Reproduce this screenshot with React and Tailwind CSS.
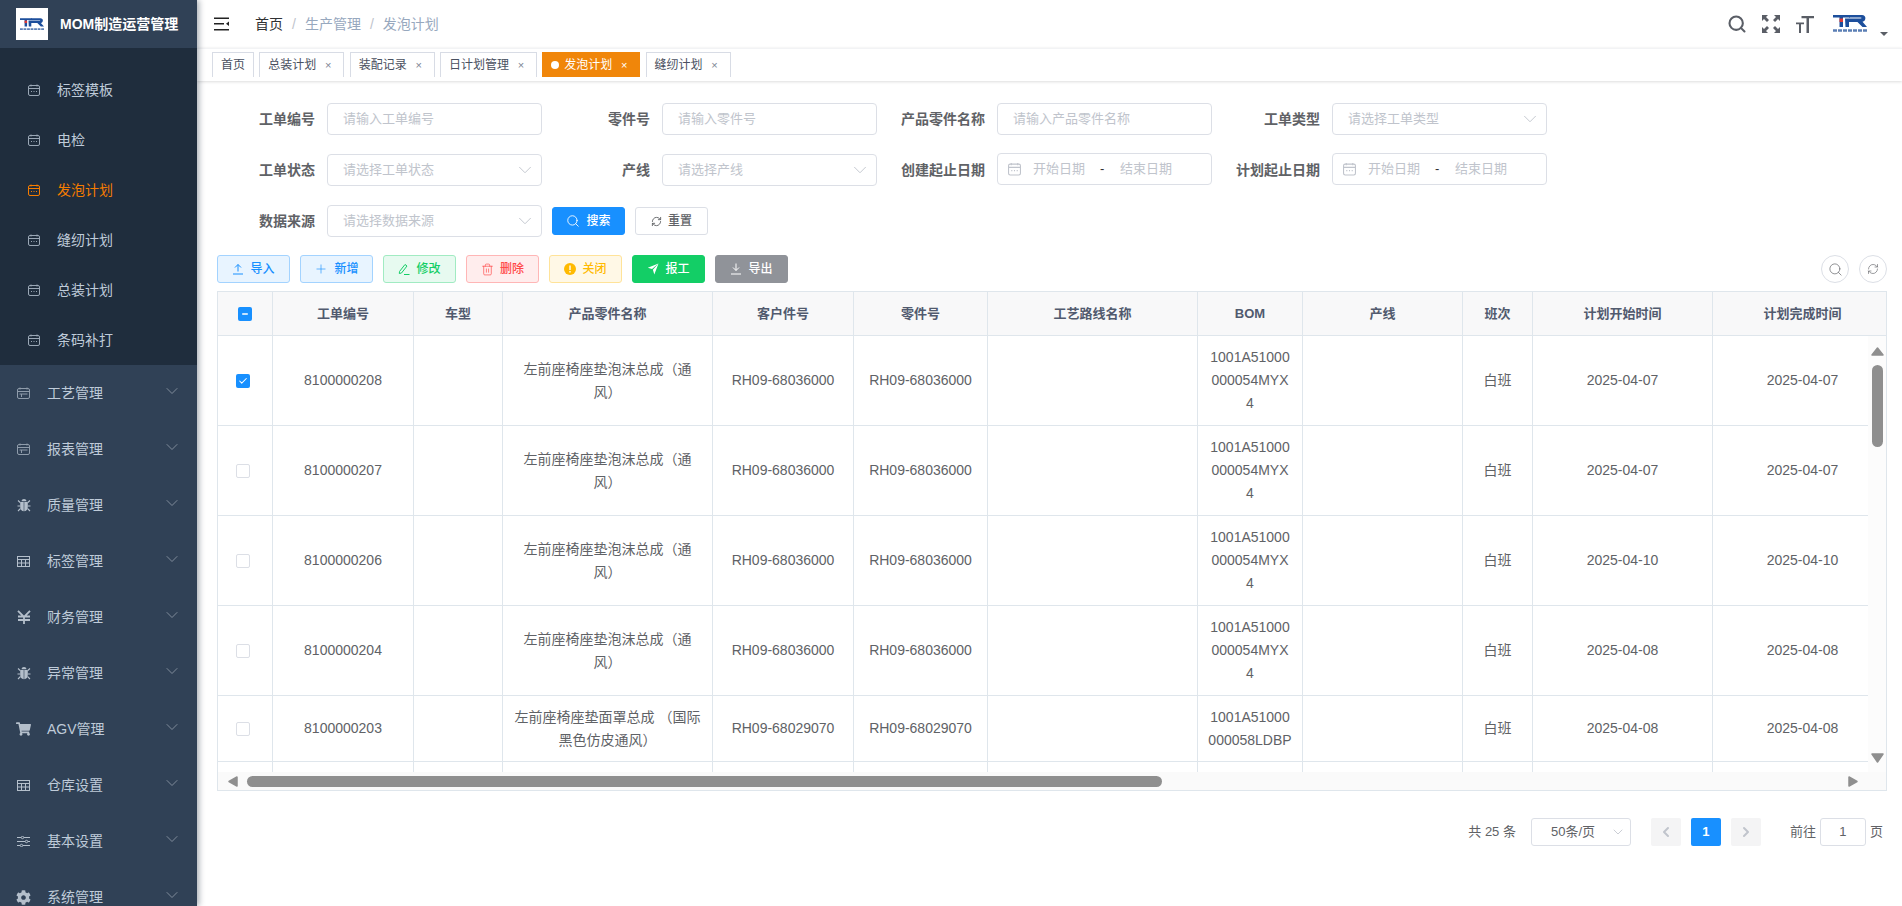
import React from 'react';
import { Search, Trash2, RefreshCw, ChevronDown, ChevronLeft, ChevronRight, Check, Minus, Plus } from 'lucide-react';
import { FaShoppingCart, FaCog } from 'react-icons/fa';

const subMenus = ['标签模板', '电检', '发泡计划', '缝纫计划', '总装计划', '条码补打'];

const mainMenus = [
  { label: '工艺管理', icon: 'plan' },
  { label: '报表管理', icon: 'plan' },
  { label: '质量管理', icon: 'bug' },
  { label: '标签管理', icon: 'table' },
  { label: '财务管理', icon: 'yen' },
  { label: '异常管理', icon: 'bug' },
  { label: 'AGV管理', icon: 'cart' },
  { label: '仓库设置', icon: 'table' },
  { label: '基本设置', icon: 'sliders' },
  { label: '系统管理', icon: 'cog' },
];

const tags = [
  { label: '首页', fixed: true },
  { label: '总装计划' },
  { label: '装配记录' },
  { label: '日计划管理' },
  { label: '发泡计划', active: true },
  { label: '缝纫计划' },
];

const columns = [
  { label: '', width: 55 },
  { label: '工单编号', width: 141 },
  { label: '车型', width: 89 },
  { label: '产品零件名称', width: 210 },
  { label: '客户件号', width: 141 },
  { label: '零件号', width: 134 },
  { label: '工艺路线名称', width: 210 },
  { label: 'BOM', width: 105 },
  { label: '产线', width: 160 },
  { label: '班次', width: 70 },
  { label: '计划开始时间', width: 180 },
  { label: '计划完成时间', width: 180 },
];

const foamName = '左前座椅座垫泡沫总成（通风）';

const rows = [
  { no: '8100000208', name: foamName, part: 'RH09-68036000', bom: '1001A51000000054MYX4', start: '2025-04-07', end: '2025-04-07', checked: true, h: 'h-[90px]' },
  { no: '8100000207', name: foamName, part: 'RH09-68036000', bom: '1001A51000000054MYX4', start: '2025-04-07', end: '2025-04-07', h: 'h-[90px]' },
  { no: '8100000206', name: foamName, part: 'RH09-68036000', bom: '1001A51000000054MYX4', start: '2025-04-10', end: '2025-04-10', h: 'h-[90px]' },
  { no: '8100000204', name: foamName, part: 'RH09-68036000', bom: '1001A51000000054MYX4', start: '2025-04-08', end: '2025-04-08', h: 'h-[90px]' },
  { no: '8100000203', name: '左前座椅座垫面罩总成 （国际黑色仿皮通风）', part: 'RH09-68029070', bom: '1001A51000000058LDBP', start: '2025-04-08', end: '2025-04-08', h: 'h-[66px]' },
];

function CalendarIcon({ className }) {
  return (
    <svg viewBox="0 0 12 12" fill="none" stroke="currentColor" strokeWidth="1" className={className}>
      <rect x="0.5" y="1.5" width="11" height="10" rx="1.5" />
      <path d="M3 0.5v2M9 0.5v2M0.5 4.5h11" />
      <path d="M3 7.5h1M5.5 7.5h1M8 7.5h1" />
    </svg>
  );
}

function PlanIcon({ className }) {
  return (
    <svg viewBox="0 0 13 12" fill="none" stroke="currentColor" strokeWidth="1" className={className}>
      <rect x="0.5" y="1.5" width="12" height="10" rx="1.5" />
      <path d="M3 0.5v2M10 0.5v2M0.5 4.5h12M2.5 7h8M4.5 7v3" />
    </svg>
  );
}

function TableIcon({ className }) {
  return (
    <svg viewBox="0 0 13 11" fill="none" stroke="currentColor" strokeWidth="1" className={className}>
      <rect x="0.5" y="0.5" width="12" height="10" />
      <path d="M0.5 3.5h12M0.5 7h12M4.5 3.5v7M8.5 3.5v7" />
    </svg>
  );
}

function SliderIcon({ className }) {
  return (
    <svg viewBox="0 0 13 11" fill="none" stroke="currentColor" strokeWidth="1" className={className}>
      <path d="M0 1.5h4M7 1.5h6M0 5.5h8M11 5.5h2M0 9.5h3M6 9.5h7" />
      <circle cx="5.5" cy="1.5" r="1.2" />
      <circle cx="9.5" cy="5.5" r="1.2" />
      <circle cx="4.5" cy="9.5" r="1.2" />
    </svg>
  );
}

function BugIcon({ className }) {
  return (
    <svg viewBox="0 0 14 14" className={className} fill="currentColor">
      <path d="M4.500 3.200C4.700 1.800 5.700 1 7 1s2.300.8 2.500 2.200z" />
      <path d="M3.200 4h3.500v9.300C4.600 13 3.200 11.300 3.200 9zM7.300 4h3.500v5c0 2.300-1.400 4-3.500 4.300z" />
      <path d="M1 2.500L3.200 4.500M13 2.500L10.800 4.500M.5 8h2.700M13.500 8h-2.700M1 13l2.500-2.500M13 13l-2.500-2.500" fill="none" stroke="currentColor" strokeWidth="1.100" />
    </svg>
  );
}

function YenIcon({ className }) {
  return (
    <svg viewBox="0 0 14 14" className={className} fill="none" stroke="currentColor" strokeWidth="1.800">
      <path d="M1 .8L7 7l6-6.200M7 7v7M1 6.500h12M1 10h12" />
    </svg>
  );
}

function MenuIcon({ type }) {
  if (type === 'plan') return <PlanIcon className="w-[13px] h-[12px] text-[#8f9cab]" />;
  if (type === 'table') return <TableIcon className="w-[13px] h-[11px]" />;
  if (type === 'sliders') return <SliderIcon className="w-[13px] h-[11px]" />;
  if (type === 'bug') return <BugIcon className="w-[14px] h-[14px]" />;
  if (type === 'cart') return <FaShoppingCart className="w-[15px] h-[14px]" />;
  if (type === 'cog') return <FaCog className="w-[15px] h-[15px]" />;
  return <YenIcon className="w-[14px] h-[14px]" />;
}

function Logo({ className }) {
  return (
    <svg viewBox="0 0 34 18" className={className}>
      <path d="M0 0h17v2.500h-7V12H6.500V2.500H0z" fill="#1d4f9c" />
      <rect x="6.500" y="3.500" width="3.500" height="3.500" fill="#e03a34" />
      <path d="M12 3.500h15.500c1.500 0 1.500-1 0-1H16V0h13c4.500 0 4.500 6 .5 6.800L34 12h-4.500l-5-5H16v5h-3.500z" fill="#1d4f9c" />
      <path d="M0 15.500h34" stroke="#5b7fb5" strokeWidth="2.500" strokeDasharray="4 1" />
    </svg>
  );
}

function Sidebar() {
  return (
    <aside className="w-[197px] shrink-0 h-full overflow-hidden bg-[#304156] shadow-[2px_0_6px_rgba(0,21,41,0.35)] z-20">
      <div className="h-[48px] flex items-center pl-[16px] bg-[#304156]">
        <div className="w-[32px] h-[32px] bg-white flex items-center justify-center">
          <Logo className="w-[24px] h-[13px]" />
        </div>
        <span className="ml-[12px] text-[14px] font-bold text-white whitespace-nowrap">MOM制造运营管理</span>
      </div>
      <div className="bg-[#1f2d3d] pt-[17px]">
        {subMenus.map((item) => (
          <div
            key={item}
            className={`h-[50px] flex items-center pl-[28px] text-[14px] ${item === '发泡计划' ? 'text-[#f57c00]' : 'text-[#bfcbd9]'}`}
          >
            <CalendarIcon className={`w-[12px] h-[12px] mr-[17px] ${item === '发泡计划' ? 'text-[#f57c00]' : 'text-[#9aa7b5]'}`} />
            {item}
          </div>
        ))}
      </div>
      {mainMenus.map((item) => (
        <div key={item.label} className="h-[56px] flex items-center pl-[16px] pr-[15px] text-[14px] text-[#bfcbd9]">
          <span className="w-[15px] mr-[16px] flex justify-center text-[#b4bfcb]">
            <MenuIcon type={item.icon} />
          </span>
          <span>{item.label}</span>
          <ChevronDown className="ml-auto w-[20px] h-[20px] -translate-y-[2px] text-[#8792a0]" strokeWidth={1.1} />
        </div>
      ))}
    </aside>
  );
}

function Navbar() {
  return (
    <div className="h-[48px] shrink-0 flex items-center bg-white pl-[17px] pr-[14px]">
      <svg viewBox="0 0 15 14" className="w-[15px] h-[14px] text-[#222]" fill="currentColor">
        <rect x="0" y="0.5" width="15" height="1.5" />
        <rect x="0" y="6" width="10" height="1.500" />
        <rect x="0" y="12" width="15" height="1.5" />
        <path d="M15 4.500v4.500l-3-2.250z" />
      </svg>
      <div className="ml-[26px] text-[14px] flex items-center">
        <span className="text-[#303133]">首页</span>
        <span className="mx-[9px] text-[#c0c4cc]">/</span>
        <span className="text-[#97a8be]">生产管理</span>
        <span className="mx-[9px] text-[#c0c4cc]">/</span>
        <span className="text-[#97a8be]">发泡计划</span>
      </div>
      <div className="ml-auto flex items-center text-[#5a5e66]">
        <Search className="w-[20px] h-[20px]" strokeWidth={2.5} />
        <svg viewBox="0 0 18 18" className="w-[18px] h-[18px] ml-[15px]" fill="currentColor">
          <path d="M0 0h6L4 2l3 3-2 2-3-3-2 2zM18 0v6l-2-2-3 3-2-2 3-3-2-2zM0 18v-6l2 2 3-3 2 2-3 3 2 2zM18 18h-6l2-2-3-3 2-2 3 3 2-2z" />
        </svg>
        <svg viewBox="0 0 18 18" className="w-[18px] h-[18px] ml-[16px]" fill="currentColor">
          <path d="M5.500 1H18v2.200h-5V18h-2.500V3.200H5.500z" />
          <path d="M0 7.500h8v1.800H5V18H3V9.300H0z" />
        </svg>
        <Logo className="w-[34px] h-[18px] ml-[19px]" />
        <svg viewBox="0 0 8 4" className="w-[8px] h-[4px] ml-[13px] mt-[20px]" fill="#5a5e66">
          <path d="M0 0h8L4 4z" />
        </svg>
      </div>
    </div>
  );
}

function TagsBar() {
  return (
    <div className="h-[33px] shrink-0 bg-white border-t border-[#f2f3f5] shadow-[0_1px_3px_rgba(0,0,0,0.12),0_0_3px_rgba(0,0,0,0.04)] pl-[15px] pt-[3px] flex gap-[5.3px] z-10">
      {tags.map((tag) => (
        <div
          key={tag.label}
          className={`h-[25px] px-[8px] flex items-center text-[12px] border-x border-t ${tag.active ? 'bg-[#f0860a] border-[#f0860a] text-white' : 'bg-white border-[#d8dce5] text-[#495060]'}`}
        >
          {tag.active && <span className="w-[8px] h-[8px] rounded-full bg-white mr-[5px]" />}
          {tag.label}
          {!tag.fixed && <span className={`ml-[5px] w-[14px] text-center text-[11px] ${tag.active ? 'text-white' : 'text-[#7d8694]'}`}>×</span>}
        </div>
      ))}
    </div>
  );
}

function Field({ label, placeholder, select, date, last }) {
  return (
    <div className={`flex items-center ${last ? '' : 'mr-[8px]'}`}>
      <label className="w-[100px] mr-[12px] text-right text-[14px] font-bold text-[#606266] whitespace-nowrap">{label}</label>
      {date ? (
        <div className="w-[215px] h-[32px] -mt-[2px] border border-[#dcdfe6] rounded-[4px] flex items-center pl-[10px] text-[13px] text-[#c0c4cc]">
          <CalendarIcon className="w-[13px] h-[14px]" />
          <span className="ml-[12px]">开始日期</span>
          <span className="ml-[15px] w-[5px] text-[#303133]">-</span>
          <span className="ml-[15px]">结束日期</span>
        </div>
      ) : (
        <div className="w-[215px] h-[32px] border border-[#dcdfe6] rounded-[4px] flex items-center px-[15px] text-[13px] text-[#c0c4cc]">
          <span>{placeholder}</span>
          {select && <ChevronDown className="ml-auto -mr-[10px] w-[22px] h-[22px]" strokeWidth={1} />}
        </div>
      )}
    </div>
  );
}

function ToolButton({ children, icon, className }) {
  return (
    <button className={`w-[73px] h-[28px] rounded-[3px] border flex items-center justify-center gap-[6px] text-[12px] font-medium ${className}`}>
      {icon}
      <span>{children}</span>
    </button>
  );
}

function EditIcon() {
  return (
    <svg viewBox="0 0 12 12" className="w-[12px] h-[12px]" fill="none" stroke="currentColor" strokeWidth="1">
      <path d="M1.500 8.500l5.500-7 2 1.500-5.500 7-2.200.500z" />
      <path d="M6 11.500h5.500" />
    </svg>
  );
}

function WarnIcon() {
  return (
    <svg viewBox="0 0 12 12" className="w-[12px] h-[12px]">
      <circle cx="6" cy="6" r="6" fill="currentColor" />
      <rect x="5.250" y="2.500" width="1.500" height="4.500" fill="#fff8e6" />
      <rect x="5.250" y="8" width="1.500" height="1.500" fill="#fff8e6" />
    </svg>
  );
}

function SendIcon() {
  return (
    <svg viewBox="0 0 12 12" className="w-[12px] h-[12px]" fill="currentColor">
      <path d="M11.500.5L.8 4.800l4.200 1.300zM11.500.5L5.900 6.800l1.400 4.700z" />
    </svg>
  );
}

function UploadIcon() {
  return (
    <svg viewBox="0 0 12 12" className="w-[12px] h-[12px]" fill="none" stroke="currentColor" strokeWidth="1">
      <path d="M6 8.500V1.500M3 4.500l3-3 3 3M1 11h10" />
    </svg>
  );
}

function DownloadIcon() {
  return (
    <svg viewBox="0 0 12 12" className="w-[12px] h-[12px]" fill="none" stroke="currentColor" strokeWidth="1">
      <path d="M6 .5v7M3 4.500l3 3 3-3M1 11h10" />
    </svg>
  );
}

function Checkbox({ state, className = '' }) {
  if (state === 'half') {
    return (
      <span className={`w-[14px] h-[14px] rounded-[2px] bg-[#1890ff] inline-flex items-center justify-center align-middle ${className}`}>
        <Minus className="w-[8px] h-[8px] text-white" strokeWidth={4} />
      </span>
    );
  }
  if (state) {
    return (
      <span className={`w-[14px] h-[14px] rounded-[2px] bg-[#1890ff] inline-flex items-center justify-center align-middle ${className}`}>
        <Check className="w-[10px] h-[10px] text-white" strokeWidth={2.5} />
      </span>
    );
  }
  return <span className={`w-[14px] h-[14px] rounded-[2px] border border-[#dcdfe6] bg-white inline-block align-middle ${className}`} />;
}

function Colgroup() {
  return (
    <colgroup>
      {columns.map((col) => (
        <col key={col.label} style={{ width: col.width }} />
      ))}
    </colgroup>
  );
}

const tableWidth = columns.reduce((sum, col) => sum + col.width, 0);
const cellClass = 'border-r border-b border-[#dfe6ec] px-[10px] text-center align-middle';

function Triangle({ dir }) {
  const points = { up: '6.500,1 12,8 1,8', down: '1,1 12,1 6.500,9', left: '9,1 9,10 1,5.500', right: '1,1 1,10 9,5.500' };
  return (
    <svg
      className={dir === 'up' || dir === 'down' ? 'w-[13px] h-[10px] shrink-0' : 'w-[10px] h-[11px] shrink-0'}
      viewBox={dir === 'up' || dir === 'down' ? '0 0 13 10' : '0 0 10 11'}
    >
      <polygon points={points[dir]} fill="#8f8f8f" stroke="#8f8f8f" strokeWidth="1.500" strokeLinejoin="round" />
    </svg>
  );
}

function DataTable() {
  return (
    <div className="ml-[20px] w-[1670px] h-[500px] border border-[#dfe6ec] overflow-hidden">
      <div className="h-[44px] overflow-hidden">
        <table className="table-fixed border-separate border-spacing-0" style={{ width: tableWidth }}>
          <Colgroup />
          <thead>
            <tr>
              {columns.map((col, i) => (
                <th key={col.label} className={`${cellClass} h-[44px] bg-[#f8f8f9] text-[13px] font-bold text-[#515a6e]`}>
                  {i === 0 ? <Checkbox state="half" /> : col.label}
                </th>
              ))}
            </tr>
          </thead>
        </table>
      </div>
      <div className="flex h-[436px]">
        <div className="w-[1651px] h-full overflow-hidden">
          <table className="table-fixed border-separate border-spacing-0 text-[14px] leading-[23px] text-[#606266] [text-spacing-trim:space-all]" style={{ width: tableWidth }}>
            <Colgroup />
            <tbody>
              {rows.map((row) => (
                <tr key={row.no}>
                  <td className={`${cellClass} ${row.h}`}>
                    <Checkbox state={row.checked} className="mr-[4px]" />
                  </td>
                  <td className={cellClass}>{row.no}</td>
                  <td className={cellClass}></td>
                  <td className={cellClass}>{row.name}</td>
                  <td className={cellClass}>{row.part}</td>
                  <td className={cellClass}>{row.part}</td>
                  <td className={cellClass}></td>
                  <td className={`${cellClass} break-all`}>{row.bom}</td>
                  <td className={cellClass}></td>
                  <td className={cellClass}>白班</td>
                  <td className={cellClass}>{row.start}</td>
                  <td className={cellClass}>{row.end}</td>
                </tr>
              ))}
              <tr>
                {columns.map((col) => (
                  <td key={col.label} className={`${cellClass} h-[40px]`}></td>
                ))}
              </tr>
            </tbody>
          </table>
        </div>
        <div className="w-[18px] h-full bg-[#fcfcfc] flex flex-col items-center pt-[11px] pb-[9px]">
          <Triangle dir="up" />
          <div className="w-[11px] h-[82px] mt-[8px] rounded-full bg-[#8f8f8f]" />
          <div className="mt-auto"><Triangle dir="down" /></div>
        </div>
      </div>
      <div className="h-[18px] bg-[#fafafa] flex items-center pl-[10px] pr-[28px]">
        <Triangle dir="left" />
        <div className="w-[915px] h-[11px] ml-[9px] rounded-full bg-[#8f8f8f]" />
        <div className="ml-auto"><Triangle dir="right" /></div>
      </div>
    </div>
  );
}

function Pagination() {
  return (
    <div className="mt-[27px] h-[28px] flex items-center justify-end pr-[19px] text-[13px] text-[#606266]">
      <span>共 25 条</span>
      <div className="ml-[15px] w-[100px] h-[28px] border border-[#dcdfe6] rounded-[3px] flex items-center pl-[19px] pr-[4px]">
        <span>50条/页</span>
        <ChevronDown className="ml-auto w-[16px] h-[16px] text-[#c0c4cc]" strokeWidth={1.25} />
      </div>
      <div className="ml-[20px] w-[30px] h-[28px] rounded-[2px] bg-[#f4f4f5] flex items-center justify-center text-[#c0c4cc]">
        <ChevronLeft className="w-[16px] h-[16px]" strokeWidth={3} />
      </div>
      <div className="ml-[10px] w-[30px] h-[28px] rounded-[2px] bg-[#1890ff] flex items-center justify-center text-white font-bold">1</div>
      <div className="ml-[10px] w-[30px] h-[28px] rounded-[2px] bg-[#f4f4f5] flex items-center justify-center text-[#c0c4cc]">
        <ChevronRight className="w-[16px] h-[16px]" strokeWidth={3} />
      </div>
      <span className="ml-[29px]">前往</span>
      <div className="ml-[4px] w-[46px] h-[28px] border border-[#dcdfe6] rounded-[3px] flex items-center justify-center">1</div>
      <span className="ml-[4px]">页</span>
    </div>
  );
}

export default function App() {
  return (
    <div className="flex h-screen overflow-hidden bg-white font-['Liberation_Sans','Noto_Sans_CJK_SC',sans-serif]">
      <Sidebar />
      <div className="flex-1 min-w-0 flex flex-col">
        <Navbar />
        <TagsBar />
        <div className="flex-1 overflow-hidden">
          <div className="pt-[22px] pl-[18px] flex flex-col gap-[19px]">
            <div className="flex">
              <Field label="工单编号" placeholder="请输入工单编号" />
              <Field label="零件号" placeholder="请输入零件号" />
              <Field label="产品零件名称" placeholder="请输入产品零件名称" />
              <Field label="工单类型" placeholder="请选择工单类型" select />
            </div>
            <div className="flex">
              <Field label="工单状态" placeholder="请选择工单状态" select />
              <Field label="产线" placeholder="请选择产线" select />
              <Field label="创建起止日期" date />
              <Field label="计划起止日期" date />
            </div>
            <div className="flex items-center">
              <Field label="数据来源" placeholder="请选择数据来源" select last />
              <ToolButton className="ml-[10px] bg-[#1890ff] border-[#1890ff] text-white" icon={<Search className="w-[14px] h-[14px]" strokeWidth={1.5} />}>搜索</ToolButton>
              <ToolButton className="ml-[10px] bg-white border-[#dcdfe6] text-[#606266]" icon={<RefreshCw className="w-[11px] h-[11px]" />}>重置</ToolButton>
            </div>
          </div>
          <div className="mt-[18px] ml-[20px] mr-[15px] flex items-center gap-[10px]">
            <ToolButton className="bg-[#e8f4ff] border-[#a3d3ff] text-[#1890ff]" icon={<UploadIcon />}>导入</ToolButton>
            <ToolButton className="bg-[#e8f4ff] border-[#a3d3ff] text-[#1890ff]" icon={<Plus className="w-[14px] h-[14px]" strokeWidth={1.1} />}>新增</ToolButton>
            <ToolButton className="bg-[#e7faf0] border-[#a1ebc2] text-[#13ce66]" icon={<EditIcon />}>修改</ToolButton>
            <ToolButton className="bg-[#ffeded] border-[#ffb6b6] text-[#ff4949]" icon={<Trash2 className="w-[13px] h-[13px]" strokeWidth={1.25} />}>删除</ToolButton>
            <ToolButton className="bg-[#fff8e6] border-[#ffe399] text-[#ffba00]" icon={<WarnIcon />}>关闭</ToolButton>
            <ToolButton className="bg-[#13ce66] border-[#13ce66] text-white" icon={<SendIcon />}>报工</ToolButton>
            <ToolButton className="bg-[#909399] border-[#909399] text-white" icon={<DownloadIcon />}>导出</ToolButton>
            <button className="ml-auto w-[28px] h-[28px] rounded-full border border-[#dcdfe6] flex items-center justify-center text-[#606266]">
              <Search className="w-[15px] h-[15px]" strokeWidth={1.1} />
            </button>
            <button className="w-[28px] h-[28px] rounded-full border border-[#dcdfe6] flex items-center justify-center text-[#606266]">
              <RefreshCw className="w-[12px] h-[12px]" strokeWidth={1.25} />
            </button>
          </div>
          <div className="mt-[8px]">
            <DataTable />
          </div>
          <Pagination />
        </div>
      </div>
    </div>
  );
}
